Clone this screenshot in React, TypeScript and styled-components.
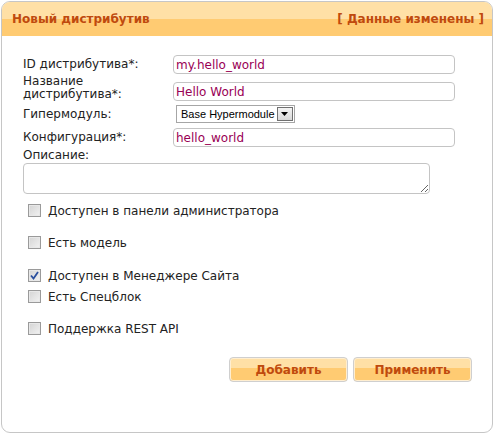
import React from 'react';
import styled, { createGlobalStyle } from 'styled-components';

const GlobalStyle = createGlobalStyle`
  html, body {
    margin: 0;
    padding: 0;
    background: #ffffff;
  }
  body {
    font-family: Verdana, "DejaVu Sans", sans-serif;
    font-size: 12px;
  }
`;

const Panel = styled.div`
  box-sizing: border-box;
  margin: 1px 0 0 1px;
  width: 492px;
  height: 432px;
  border: 1px solid #c6c6c6;
  border-radius: 9px;
  background: #ffffff;
  display: flex;
  flex-direction: column;
  overflow: hidden;
`;

const Header = styled.div`
  height: 34px;
  display: flex;
  align-items: center;
  justify-content: space-between;
  padding: 0 8px 0 10px;
  background: linear-gradient(to bottom, #ffe0a6 0%, #ffe0a6 50%, #ffcb72 50%, #ffcb72 100%);
  font-weight: bold;
  font-size: 12px;
  color: #bf4a0e;
`;

const Body = styled.div`
  padding: 19px 0 0 21px;
  display: flex;
  flex-direction: column;
`;

const Row = styled.div<{ $h: number; $mt: number }>`
  display: flex;
  align-items: center;
  height: ${({ $h }) => $h}px;
  margin-top: ${({ $mt }) => $mt}px;
`;

const Label = styled.div`
  width: 150px;
  flex-shrink: 0;
  color: #222222;
  line-height: 13px;
`;

const TextInput = styled.input`
  box-sizing: border-box;
  width: 282px;
  height: 19px;
  border: 1px solid #c4c4c4;
  border-radius: 4px;
  padding: 0 2px;
  font-family: Verdana, "DejaVu Sans", sans-serif;
  font-size: 12px;
  color: #990055;
  outline: none;
  background: #fff;
`;

const LowInput = styled(TextInput)`
  align-self: flex-end;
`;

const SelectBox = styled.div`
  margin-left: 3px;
  box-sizing: border-box;
  height: 18px;
  display: flex;
  align-items: center;
  gap: 2px;
  border: 1px solid #a6a6a6;
  background: #ffffff;
  font-family: "Liberation Sans", Arial, sans-serif;
  font-size: 11px;
  color: #000;
  padding: 0 1px 0 4px;
  white-space: nowrap;
  flex-shrink: 0;
`;

const SelectArrow = styled.div`
  box-sizing: border-box;
  width: 16px;
  height: 14px;
  border: 1px solid #707070;
  background: linear-gradient(to bottom, #f4f4f4, #d8d8d8);
  display: flex;
  align-items: center;
  justify-content: center;
`;

const PlainLabel = styled.div`
  margin-top: 2px;
  color: #222222;
  line-height: 13px;
`;

const TextArea = styled.textarea`
  box-sizing: border-box;
  margin-top: 1px;
  width: 407px;
  height: 31px;
  border: 1px solid #c4c4c4;
  border-radius: 4px;
  resize: both;
  outline: none;
  font-family: Verdana, "DejaVu Sans", sans-serif;
  font-size: 12px;
`;

const CheckList = styled.div`
  display: flex;
  flex-direction: column;
  padding-left: 5px;
  margin-top: 6px;
`;

const CheckRow = styled.label<{ $mt: number }>`
  display: flex;
  align-items: center;
  gap: 7px;
  height: 21px;
  margin-top: ${({ $mt }) => $mt}px;
  color: #222222;
`;

const Box = styled.span`
  box-sizing: border-box;
  width: 13px;
  height: 13px;
  border: 1px solid #9a9a9a;
  background: linear-gradient(135deg, #d4d4d4, #f2f2f2);
  box-shadow: inset 0 0 0 1px #e8e8e8;
  display: flex;
  align-items: center;
  justify-content: center;
`;

const Buttons = styled.div`
  display: flex;
  justify-content: flex-end;
  gap: 5px;
  margin-top: 18px;
  padding-right: 20px;
`;

const Button = styled.button`
  box-sizing: border-box;
  width: 119px;
  height: 25px;
  border: 1px solid #cfcfcf;
  border-radius: 4px;
  background: linear-gradient(to bottom, #ffe0a6 0%, #ffe0a6 45%, #ffcb72 45%, #ffcb72 100%);
  box-shadow: inset 0 0 0 1px #ffeed0;
  font-family: Verdana, "DejaVu Sans", sans-serif;
  font-size: 12px;
  font-weight: bold;
  color: #bf4a0e;
  padding: 0;
`;

const checks = [
  { text: 'Доступен в панели администратора', checked: false, mt: 0 },
  { text: 'Есть модель', checked: false, mt: 11 },
  { text: 'Доступен в Менеджере Сайта', checked: true, mt: 12 },
  { text: 'Есть Спецблок', checked: false, mt: 0 },
  { text: 'Поддержка REST API', checked: false, mt: 11 },
];

export default function App() {
  return (
    <>
      <GlobalStyle />
      <Panel>
        <Header>
          <span>Новый дистрибутив</span>
          <span>[ Данные изменены ]</span>
        </Header>
        <Body>
          <Row $h={19} $mt={0}>
            <Label>ID дистрибутива*:</Label>
            <TextInput defaultValue="my.hello_world" />
          </Row>
          <Row $h={26} $mt={1}>
            <Label>Название<br />дистрибутива*:</Label>
            <LowInput defaultValue="Hello World" />
          </Row>
          <Row $h={18} $mt={4}>
            <Label>Гипермодуль:</Label>
            <SelectBox>
              <span>Base Hypermodule</span>
              <SelectArrow>
                <svg width="7" height="4" viewBox="0 0 7 4">
                  <path d="M0 0h7L3.5 4z" fill="#000" />
                </svg>
              </SelectArrow>
            </SelectBox>
          </Row>
          <Row $h={19} $mt={5}>
            <Label>Конфигурация*:</Label>
            <TextInput defaultValue="hello_world" />
          </Row>
          <PlainLabel>Описание:</PlainLabel>
          <TextArea />
          <CheckList>
            {checks.map((c) => (
              <CheckRow key={c.text} $mt={c.mt}>
                <Box>
                  {c.checked && (
                    <svg width="9" height="9" viewBox="0 0 9 9">
                      <path d="M1 4.5 L3.5 7.5 L8 1" stroke="#2a4f9e" strokeWidth="1.8" fill="none" />
                    </svg>
                  )}
                </Box>
                <span>{c.text}</span>
              </CheckRow>
            ))}
          </CheckList>
        </Body>
        <Buttons>
          <Button>Добавить</Button>
          <Button>Применить</Button>
        </Buttons>
      </Panel>
    </>
  );
}
